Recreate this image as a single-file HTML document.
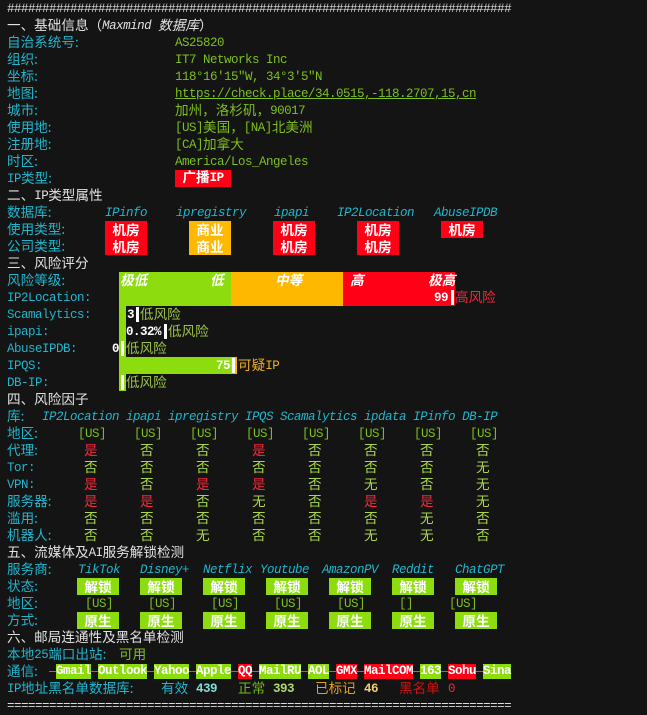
<!DOCTYPE html>
<html><head><meta charset="utf-8"><style>
body{margin:0;background:#141414;width:647px;height:713px;overflow:hidden;position:relative;font:12.5px/17px "Liberation Mono","Noto Sans CJK SC",monospace;letter-spacing:-0.5px;color:#e2e2e2}
.a{position:absolute;white-space:pre;height:17px;line-height:17px;padding-top:1px;box-sizing:border-box}
.z{font-family:"Noto Sans CJK SC","WenQuanYi Zen Hei",sans-serif;font-size:13.6px;letter-spacing:0;display:inline-block;vertical-align:top;line-height:17px;height:17px;transform:translateY(-2px)}
.c{color:#1fb6ce}.g{color:#7dbf1e}.it{font-style:italic}
.w{color:#fff;font-weight:bold}
.bx{position:absolute;height:17px;line-height:17px;color:#fff;font-weight:bold;text-align:center;white-space:pre}
.bx.z{transform:none}
.R{background:#ff0016}.O{background:#ffb800}.G{background:#8ddc0e}
.y{color:#a8d84a}.r{color:#ee2a3c}.lg{color:#9cc24a}
</style></head><body>
<div class="a" style="top:0;left:7px;color:#ddd">########################################################################</div>
<div class="a" style="top:17px;left:7px"><span class="z">一、基础信息（</span><span class="it">Maxmind <span class="z">数据库</span></span><span class="z">）</span></div>
<div class="a c z" style="top:34px;left:7px">自治系统号:</div><div class="a g" style="top:34px;left:175px">AS25820</div>
<div class="a c z" style="top:51px;left:7px">组织:</div><div class="a g" style="top:51px;left:175px">IT7 Networks Inc</div>
<div class="a c z" style="top:68px;left:7px">坐标:</div><div class="a g" style="top:68px;left:175px">118°16′15″W, 34°3′5″N</div>
<div class="a c z" style="top:85px;left:7px">地图:</div><div class="a g" style="top:85px;left:175px;text-decoration:underline">https://check.place/34.0515,-118.2707,15,cn</div>
<div class="a c z" style="top:102px;left:7px">城市:</div><div class="a g" style="top:102px;left:175px"><span class="z">加州，洛杉矶，</span>90017</div>
<div class="a c z" style="top:119px;left:7px">使用地:</div><div class="a g" style="top:119px;left:175px">[US]<span class="z">美国，</span>[NA]<span class="z">北美洲</span></div>
<div class="a c z" style="top:136px;left:7px">注册地:</div><div class="a g" style="top:136px;left:175px">[CA]<span class="z">加拿大</span></div>
<div class="a c z" style="top:153px;left:7px">时区:</div><div class="a g" style="top:153px;left:175px">America/Los_Angeles</div>
<div class="a c" style="top:170px;left:7px">IP<span class="z">类型:</span></div><div class="bx R" style="top:170px;left:175px;width:56px"><span class="z">广播</span>IP</div>
<div class="a" style="top:187px;left:7px"><span class="z">二、</span>IP<span class="z">类型属性</span></div>
<div class="a c z" style="top:204px;left:7px">数据库:</div>
<div class="a c it" style="top:204px;left:105px">IPinfo</div><div class="a c it" style="top:204px;left:176px">ipregistry</div><div class="a c it" style="top:204px;left:274px">ipapi</div><div class="a c it" style="top:204px;left:337px">IP2Location</div><div class="a c it" style="top:204px;left:434px">AbuseIPDB</div>
<div class="a c z" style="top:221px;left:7px">使用类型:</div>
<div class="bx R z" style="top:221px;left:105px;width:42px">机房</div><div class="bx O z" style="top:221px;left:189px;width:42px">商业</div><div class="bx R z" style="top:221px;left:273px;width:42px">机房</div><div class="bx R z" style="top:221px;left:357px;width:42px">机房</div><div class="bx R z" style="top:221px;left:441px;width:42px">机房</div>
<div class="a c z" style="top:238px;left:7px">公司类型:</div>
<div class="bx R z" style="top:238px;left:105px;width:42px">机房</div><div class="bx O z" style="top:238px;left:189px;width:42px">商业</div><div class="bx R z" style="top:238px;left:273px;width:42px">机房</div><div class="bx R z" style="top:238px;left:357px;width:42px">机房</div>
<div class="a z" style="top:255px;left:7px">三、风险评分</div>
<div class="a c z" style="top:272px;left:7px">风险等级:</div>
<div style="position:absolute;top:272px;left:119px;width:112px;height:34px" class="G"></div>
<div style="position:absolute;top:272px;left:231px;width:112px;height:34px" class="O"></div>
<div style="position:absolute;top:272px;left:343px;width:112px;height:34px" class="R"></div>
<div class="a z it w" style="top:272px;left:120px">极低</div><div class="a z it w" style="top:272px;left:210px">低</div><div class="a z it w" style="top:272px;left:275px">中等</div><div class="a z it w" style="top:272px;left:350px">高</div><div class="a z it w" style="top:272px;left:428px">极高</div>
<div class="a c" style="top:289px;left:7px">IP2Location:</div>
<div class="a w" style="top:289px;left:434px">99</div><div style="position:absolute;top:290px;left:451px;width:3px;height:15px;background:#fff"></div><div class="a z r" style="top:289px;left:455px">高风险</div>
<div style="position:absolute;top:306px;left:119px;width:7px;height:85px" class="G"></div>
<div class="a c" style="top:306px;left:7px">Scamalytics:</div>
<div class="a w" style="top:306px;left:127px">3</div><div style="position:absolute;top:307px;left:136px;width:3px;height:15px;background:#fff"></div><div class="a z lg" style="top:306px;left:140px">低风险</div>
<div class="a c" style="top:323px;left:7px">ipapi:</div>
<div class="a w" style="top:323px;left:126px">0.32%</div><div style="position:absolute;top:324px;left:164px;width:3px;height:15px;background:#fff"></div><div class="a z lg" style="top:323px;left:168px">低风险</div>
<div class="a c" style="top:340px;left:7px">AbuseIPDB:</div>
<div class="a w" style="top:340px;left:112px">0</div><div style="position:absolute;top:341px;left:121px;width:3px;height:15px;background:#fff"></div><div class="a z lg" style="top:340px;left:126px">低风险</div>
<div class="a c" style="top:357px;left:7px">IPQS:</div>
<div style="position:absolute;top:357px;left:119px;width:112px;height:17px" class="G"></div>
<div class="a w" style="top:357px;left:216px">75</div><div style="position:absolute;top:357px;left:231px;width:6px;height:17px;background:#ffb800"></div><div style="position:absolute;top:358px;left:232px;width:3px;height:15px;background:#fff"></div><div class="a" style="top:357px;left:238px;color:#f0b020"><span class="z">可疑</span>IP</div>
<div class="a c" style="top:374px;left:7px">DB-IP:</div>
<div style="position:absolute;top:375px;left:121px;width:3px;height:15px;background:#fff"></div><div class="a z lg" style="top:374px;left:126px">低风险</div>
<div class="a z" style="top:391px;left:7px">四、风险因子</div>
<div class="a c" style="top:408px;left:7px"><span class="z">库:</span></div><div class="a c it" style="top:408px;left:42px">IP2Location ipapi ipregistry IPQS Scamalytics ipdata IPinfo DB-IP</div>
<div class="a c z" style="top:425px;left:7px">地区:</div>
<div class="a g" style="top:425px;left:78px">[US]</div><div class="a g" style="top:425px;left:134px">[US]</div><div class="a g" style="top:425px;left:190px">[US]</div><div class="a g" style="top:425px;left:246px">[US]</div><div class="a g" style="top:425px;left:302px">[US]</div><div class="a g" style="top:425px;left:358px">[US]</div><div class="a g" style="top:425px;left:414px">[US]</div><div class="a g" style="top:425px;left:470px">[US]</div>
<div class="a c z" style="top:442px;left:7px">代理:</div>
<div class="a c" style="top:459px;left:7px">Tor:</div>
<div class="a c" style="top:476px;left:7px">VPN:</div>
<div class="a c z" style="top:493px;left:7px">服务器:</div>
<div class="a c z" style="top:510px;left:7px">滥用:</div>
<div class="a c z" style="top:527px;left:7px">机器人:</div>
<div class="a" style="top:544px;left:7px"><span class="z">五、流媒体及</span>AI<span class="z">服务解锁检测</span></div>
<div class="a c z" style="top:561px;left:7px">服务商:</div>
<div class="a c it" style="top:561px;left:78px">TikTok</div><div class="a c it" style="top:561px;left:140px">Disney+</div><div class="a c it" style="top:561px;left:203px">Netflix</div><div class="a c it" style="top:561px;left:260px">Youtube</div><div class="a c it" style="top:561px;left:322px">AmazonPV</div><div class="a c it" style="top:561px;left:392px">Reddit</div><div class="a c it" style="top:561px;left:455px">ChatGPT</div>
<div class="a c z" style="top:578px;left:7px">状态:</div>
<div class="a c z" style="top:595px;left:7px">地区:</div>
<div class="a c z" style="top:612px;left:7px">方式:</div>
<div class="bx G z" style="top:578px;left:77px;width:42px">解锁</div><div class="bx G z" style="top:578px;left:140px;width:42px">解锁</div><div class="bx G z" style="top:578px;left:203px;width:42px">解锁</div><div class="bx G z" style="top:578px;left:266px;width:42px">解锁</div><div class="bx G z" style="top:578px;left:329px;width:42px">解锁</div><div class="bx G z" style="top:578px;left:392px;width:42px">解锁</div><div class="bx G z" style="top:578px;left:455px;width:42px">解锁</div>
<div class="a g" style="top:595px;left:85px">[US]</div><div class="a g" style="top:595px;left:148px">[US]</div><div class="a g" style="top:595px;left:211px">[US]</div><div class="a g" style="top:595px;left:274px">[US]</div><div class="a g" style="top:595px;left:337px">[US]</div><div class="a g" style="top:595px;left:399px">[]</div><div class="a g" style="top:595px;left:449px">[US]</div>
<div class="bx G z" style="top:612px;left:77px;width:42px">原生</div><div class="bx G z" style="top:612px;left:140px;width:42px">原生</div><div class="bx G z" style="top:612px;left:203px;width:42px">原生</div><div class="bx G z" style="top:612px;left:266px;width:42px">原生</div><div class="bx G z" style="top:612px;left:329px;width:42px">原生</div><div class="bx G z" style="top:612px;left:392px;width:42px">原生</div><div class="bx G z" style="top:612px;left:455px;width:42px">原生</div>
<div class="a z" style="top:629px;left:7px">六、邮局连通性及黑名单检测</div>
<div class="a c" style="top:646px;left:7px"><span class="z">本地</span>25<span class="z">端口出站:</span></div><div class="a g z" style="top:646px;left:119px">可用</div>
<div class="a c z" style="top:663px;left:7px">通信:</div>
<div style="position:absolute;top:671px;left:49px;width:462px;height:1px;background:#777"></div>
<div class="bx G" style="top:664px;height:15px;line-height:15px;left:56px;width:35px">Gmail</div>
<div class="bx G" style="top:664px;height:15px;line-height:15px;left:98px;width:49px">Outlook</div>
<div class="bx G" style="top:664px;height:15px;line-height:15px;left:154px;width:35px">Yahoo</div>
<div class="bx G" style="top:664px;height:15px;line-height:15px;left:196px;width:35px">Apple</div>
<div class="bx R" style="top:664px;height:15px;line-height:15px;left:238px;width:14px">QQ</div>
<div class="bx G" style="top:664px;height:15px;line-height:15px;left:259px;width:42px">MailRU</div>
<div class="bx G" style="top:664px;height:15px;line-height:15px;left:308px;width:21px">AOL</div>
<div class="bx R" style="top:664px;height:15px;line-height:15px;left:336px;width:21px">GMX</div>
<div class="bx R" style="top:664px;height:15px;line-height:15px;left:364px;width:49px">MailCOM</div>
<div class="bx G" style="top:664px;height:15px;line-height:15px;left:420px;width:21px">163</div>
<div class="bx R" style="top:664px;height:15px;line-height:15px;left:448px;width:28px">Sohu</div>
<div class="bx G" style="top:664px;height:15px;line-height:15px;left:483px;width:28px">Sina</div>
<div class="a c" style="top:680px;left:7px">IP<span class="z">地址黑名单数据库:</span></div>
<div class="a c z" style="top:680px;left:161px">有效</div><div class="a" style="top:680px;left:196px;color:#7fe0d8;font-weight:bold">439</div>
<div class="a z" style="top:680px;left:238px;color:#6fb81a">正常</div><div class="a" style="top:680px;left:273px;color:#b0d870;font-weight:bold">393</div>
<div class="a z" style="top:680px;left:315px;color:#e0a020">已标记</div><div class="a" style="top:680px;left:364px;color:#f0d070;font-weight:bold">46</div>
<div class="a z" style="top:680px;left:399px;color:#d01010">黑名单</div><div class="a" style="top:680px;left:448px;color:#e03040">0</div>
<div class="a" style="top:697px;left:7px;color:#ddd">========================================================================</div>
<div class="a z r" style="top:442px;left:84px">是</div><div class="a z y" style="top:442px;left:140px">否</div><div class="a z y" style="top:442px;left:196px">否</div><div class="a z r" style="top:442px;left:252px">是</div><div class="a z y" style="top:442px;left:308px">否</div><div class="a z y" style="top:442px;left:364px">否</div><div class="a z y" style="top:442px;left:420px">否</div><div class="a z y" style="top:442px;left:476px">否</div>
<div class="a z y" style="top:459px;left:84px">否</div><div class="a z y" style="top:459px;left:140px">否</div><div class="a z y" style="top:459px;left:196px">否</div><div class="a z y" style="top:459px;left:252px">否</div><div class="a z y" style="top:459px;left:308px">否</div><div class="a z y" style="top:459px;left:364px">否</div><div class="a z y" style="top:459px;left:420px">否</div><div class="a z y" style="top:459px;left:476px">无</div>
<div class="a z r" style="top:476px;left:84px">是</div><div class="a z y" style="top:476px;left:140px">否</div><div class="a z r" style="top:476px;left:196px">是</div><div class="a z r" style="top:476px;left:252px">是</div><div class="a z y" style="top:476px;left:308px">否</div><div class="a z y" style="top:476px;left:364px">无</div><div class="a z y" style="top:476px;left:420px">否</div><div class="a z y" style="top:476px;left:476px">无</div>
<div class="a z r" style="top:493px;left:84px">是</div><div class="a z r" style="top:493px;left:140px">是</div><div class="a z y" style="top:493px;left:196px">否</div><div class="a z y" style="top:493px;left:252px">无</div><div class="a z y" style="top:493px;left:308px">否</div><div class="a z r" style="top:493px;left:364px">是</div><div class="a z r" style="top:493px;left:420px">是</div><div class="a z y" style="top:493px;left:476px">无</div>
<div class="a z y" style="top:510px;left:84px">否</div><div class="a z y" style="top:510px;left:140px">否</div><div class="a z y" style="top:510px;left:196px">否</div><div class="a z y" style="top:510px;left:252px">否</div><div class="a z y" style="top:510px;left:308px">否</div><div class="a z y" style="top:510px;left:364px">否</div><div class="a z y" style="top:510px;left:420px">无</div><div class="a z y" style="top:510px;left:476px">否</div>
<div class="a z y" style="top:527px;left:84px">否</div><div class="a z y" style="top:527px;left:140px">否</div><div class="a z y" style="top:527px;left:196px">无</div><div class="a z y" style="top:527px;left:252px">否</div><div class="a z y" style="top:527px;left:308px">否</div><div class="a z y" style="top:527px;left:364px">无</div><div class="a z y" style="top:527px;left:420px">无</div><div class="a z y" style="top:527px;left:476px">否</div>
</body></html>
